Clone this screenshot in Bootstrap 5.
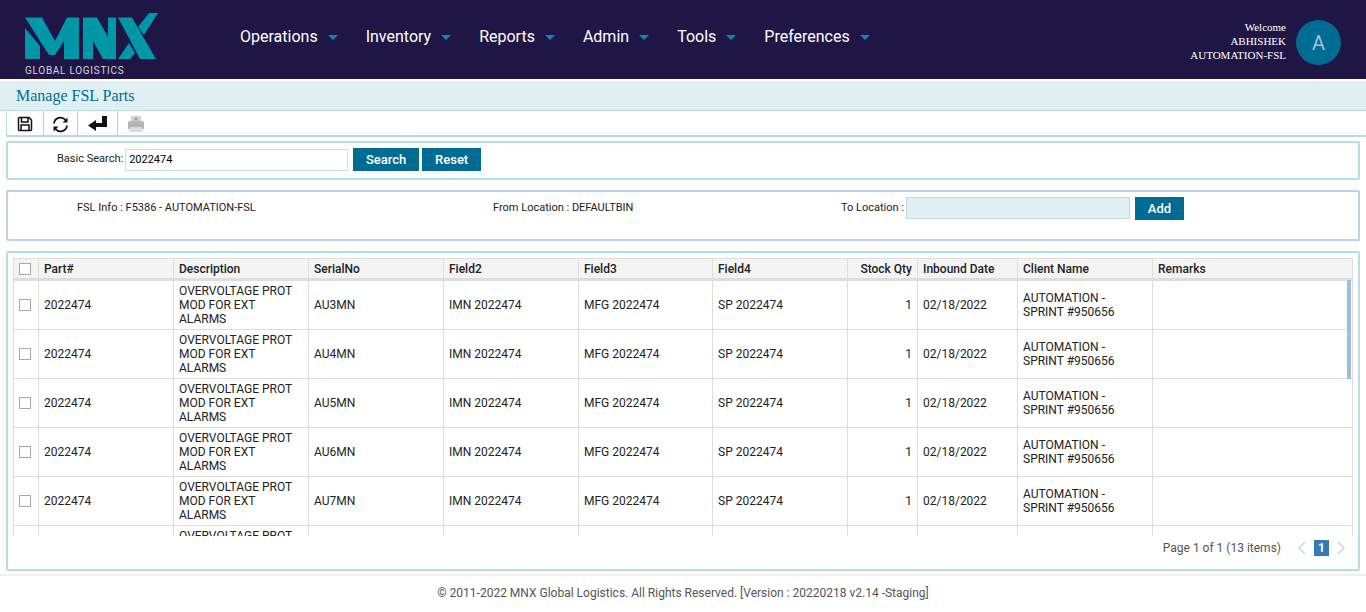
<!DOCTYPE html>
<html lang="en">
<head>
<meta charset="UTF-8">
<title>Manage FSL Parts</title>
<link href="https://cdn.jsdelivr.net/npm/bootstrap@5.3.0/dist/css/bootstrap.min.css" rel="stylesheet">
<style>
body { font-family: Roboto, "Liberation Sans", sans-serif; font-size: 12px; color: #222; background: #fff; height: 612px; overflow: hidden; }
.top-bar { height: 79px; background: #1f1646; color: #fff; padding-left: 25px; padding-right: 25px; }
.brand-box { width: 215px; padding-top: 13px; }
.brand-sub { font-size: 10px; letter-spacing: .72px; color: #d5d5dc; line-height: 10px; margin-top: 5px; white-space: nowrap; }
.menu-link { color: #fff; font-size: 16px; margin-right: 28px; text-decoration: none; display: flex; align-items: center; }
.menu-link:hover { color: #fff; }
.main-menu { margin-bottom: 6px; }
.menu-caret { width: 0; height: 0; border-left: 5px solid transparent; border-right: 5px solid transparent; border-top: 5px solid #0a85c0; margin-left: 10px; margin-top: 2px; }
.user-text { font-family: "Liberation Serif", serif; font-size: 11px; line-height: 14px; text-align: right; margin-right: 10px; margin-top: 3px; }
.user-avatar { width: 45px; height: 45px; border-radius: 50%; background: #006c93; color: #9cc6dd; font-size: 20px; margin-top: 6px; }
.title-bar { margin-top: 2px; height: 30px; background: #e0eff2; border-bottom: 1px solid #b7dde2; font-family: "Liberation Serif", serif; font-size: 16px; color: #006c93; padding-left: 16px; line-height: 29px; }
.tool-bar { height: 26px; margin-left: 6px; border-left: 1px solid #b7dde2; border-bottom: 2px solid #b7dde2; }
.tool-btn { height: 24px; padding-top: 2px; border-right: 1px solid #c8c8c8; }
.panel-box { margin-left: 6px; margin-right: 6px; border: 2px solid #b7dde2; border-radius: 2px; }
.search-panel { margin-top: 4px; height: 39px; padding-left: 49px; padding-bottom: 2px; }
.field-label { font-size: 11px; color: #222; white-space: nowrap; }
.search-input { width: 223px; height: 22px; border: 1px solid #c6dfe3; font-size: 11px; padding: 0 3px; margin-left: 2px; margin-right: 5px; outline: none; }
.mnx-btn { background: #006c93; color: #fff; border: 0; font-size: 13px; font-weight: 500; height: 23px; padding: 0; border-radius: 0; }
.info-panel { margin-top: 10px; height: 51px; border-color: #b8d2e8; }
.info-col { padding-top: 8px; font-size: 11px; color: #222; }
.to-input { width: 224px; height: 22px; background: #e0eff2; border: 1px solid #b7dde2; margin: 0 5px 0 2px; }
.grid-panel { margin-top: 10px; height: 320px; padding: 5px 5px 0 5px; }
.grid-scroll { height: 278px; overflow: hidden; position: relative; width: 1340px; border-right: 1px solid #ddd; }
.parts-grid { table-layout: fixed; border-collapse: collapse; width: 1340px; font-size: 12px; margin: 0; }
.parts-grid th { background: #f4f4f4; font-weight: 500; height: 21px; padding: 1px 5px 0; border: 1px solid #ddd; border-bottom: 3px solid #ddd; white-space: nowrap; color: #222; }
.parts-grid td { height: 49px; padding: 0 5px; border: 1px solid #ddd; line-height: 14px; vertical-align: middle; color: #222; }
.parts-grid tbody tr:first-child td { height: 50px; }
.fake-check { display: block; width: 12px; height: 12px; border: 1px solid #a8a8a8; background: #fff; }
.grid-thumb { position: absolute; right: 1px; top: 22px; width: 4px; height: 99px; background: #9cbfdc; }
.pager-row { height: 24px; padding-right: 7px; color: #555; }
.pager-cur { width: 15px; height: 16px; background: #337ab7; color: #fff; font-weight: 700; line-height: 16px; text-align: center; margin: 0 7px; }
.site-foot { margin-top: 3px; border-top: 2px solid #eee; text-align: center; color: #555; font-size: 12px; padding-top: 8px; }
</style>
</head>
<body>
<div class="top-bar d-flex align-items-center">
  <div class="brand-box align-self-start">
    <svg width="134" height="48" viewBox="0 0 134 48" class="d-block">
      <g fill="#0097a9">
        <polygon points="0,15 15,33 15,46 0,46"/>
        <polygon points="0,4.500 17,4.500 30,28 42,4.500 54,4.500 54,46 39,46 39,28 30,42 24,42"/>
        <polygon points="58,4.500 72,4.500 83,24 83,4.500 91,4.500 91,46 78,46 68,28 68,46 58,46"/>
        <polygon points="93,4.500 107,4.500 131,46 115,46"/>
        <polygon points="93,46 104,30 110,40 105,46"/>
        <polygon points="113,14 124,0 133,0 119,22"/>
      </g>
    </svg>
    <div class="brand-sub">GLOBAL LOGISTICS</div>
  </div>
  <nav class="main-menu d-flex flex-grow-1">
    <a class="menu-link" href="#">Operations<span class="menu-caret"></span></a>
    <a class="menu-link" href="#">Inventory<span class="menu-caret"></span></a>
    <a class="menu-link" href="#">Reports<span class="menu-caret"></span></a>
    <a class="menu-link" href="#">Admin<span class="menu-caret"></span></a>
    <a class="menu-link" href="#">Tools<span class="menu-caret"></span></a>
    <a class="menu-link" href="#">Preferences<span class="menu-caret"></span></a>
  </nav>
  <div class="user-text">Welcome<br>ABHISHEK<br>AUTOMATION-FSL</div>
  <div class="user-avatar d-flex align-items-center justify-content-center">A</div>
</div>
<div class="title-bar">Manage FSL Parts</div>
<div class="tool-bar d-flex">
  <div class="tool-btn d-flex align-items-center justify-content-center" style="width:37px">
    <svg width="16" height="16" viewBox="0 0 16 16" fill="none" stroke="#111" stroke-width="1.5"><path d="M1.500 2.500q0-1 1-1h9.500l2.500 2.500v9.500q0 1-1 1h-11q-1 0-1-1z"/><path d="M4.500 1.500v4.500h6.500v-4.500M4 14.500v-5.500h8v5.500"/></svg>
  </div>
  <div class="tool-btn d-flex align-items-center justify-content-center" style="width:34px">
    <svg width="17" height="17" viewBox="0 0 17 17" fill="none" stroke="#111" stroke-width="1.800"><path d="M2 7.500a6.500 6.500 0 0 1 11.500-3.500"/><path d="M15 9.500a6.500 6.500 0 0 1-11.500 3.500"/><path fill="#111" stroke="none" d="M15.500 1.500v5h-5zM1.500 15.500v-5h5z"/></svg>
  </div>
  <div class="tool-btn d-flex align-items-center justify-content-center" style="width:40px">
    <svg width="20" height="16" viewBox="0 0 20 16"><path fill="#111" d="M14 0h5v11H8v4L0 9.500 8 4v3h6z"/></svg>
  </div>
  <div class="tool-btn d-flex align-items-center justify-content-center border-0" style="width:35px">
    <svg width="18" height="18" viewBox="0 0 18 18"><path fill="#d0d0d0" d="M4 1h10v6H4z"/><path fill="#b4b4b4" d="M1 8q0-2 2-2h12q2 0 2 2v6H1z"/><path fill="#dcdcdc" d="M3 12h12v5H3z"/><path stroke="#888" d="M7.500 4h3M9 2.500v3"/></svg>
  </div>
</div>
<div class="panel-box search-panel d-flex align-items-center">
  <span class="field-label">Basic Search:</span>
  <input class="search-input" value="2022474">
  <button class="btn mnx-btn" style="width:66px;margin-right:3px">Search</button>
  <button class="btn mnx-btn" style="width:59px">Reset</button>
</div>
<div class="panel-box info-panel d-flex">
  <div class="info-col" style="width:485px;padding-left:69px">FSL Info : F5386 - AUTOMATION-FSL</div>
  <div class="info-col" style="width:348px">From Location : DEFAULTBIN</div>
  <div class="d-flex align-items-start" style="padding-top:5px">
    <span class="field-label" style="padding-top:3px">To Location :</span>
    <span class="to-input"></span>
    <button class="btn mnx-btn" style="width:49px">Add</button>
  </div>
</div>
<div class="panel-box grid-panel">
  <div class="grid-scroll">
    <table class="parts-grid">
      <colgroup>
        <col style="width:25px"><col style="width:135px"><col style="width:135px"><col style="width:135px"><col style="width:135px"><col style="width:134px"><col style="width:135px"><col style="width:70px"><col style="width:100px"><col style="width:135px"><col style="width:201px">
      </colgroup>
      <thead>
        <tr><th><span class="fake-check"></span></th><th>Part#</th><th>Description</th><th>SerialNo</th><th>Field2</th><th>Field3</th><th>Field4</th><th class="text-end">Stock Qty</th><th>Inbound Date</th><th>Client Name</th><th>Remarks</th></tr>
      </thead>
      <tbody id="rows"></tbody>
    </table>
    <div class="grid-thumb"></div>
  </div>
  <div class="pager-row d-flex align-items-center justify-content-end">
    <span>Page 1 of 1 (13 items)</span>
    <svg class="ms-3" width="10" height="14" viewBox="0 0 10 14" fill="none" stroke="#c5d9ec" stroke-width="1.500"><path d="M8 1 2 7l6 6"/></svg>
    <span class="pager-cur">1</span>
    <svg width="10" height="14" viewBox="0 0 10 14" fill="none" stroke="#c5d9ec" stroke-width="1.500"><path d="m2 1 6 6-6 6"/></svg>
  </div>
</div>
<div class="site-foot">© 2011-2022 MNX Global Logistics. All Rights Reserved. [Version : 20220218 v2.14 -Staging]</div>
<script>
const serials = ['AU3MN', 'AU4MN', 'AU5MN', 'AU6MN', 'AU7MN', 'AU8MN'];
document.getElementById('rows').innerHTML = serials.map(s => `<tr>
  <td><span class="fake-check"></span></td><td>2022474</td><td>OVERVOLTAGE PROT MOD FOR EXT ALARMS</td><td>${s}</td>
  <td>IMN 2022474</td><td>MFG 2022474</td><td>SP 2022474</td><td class="text-end">1</td><td>02/18/2022</td>
  <td>AUTOMATION - SPRINT #950656</td><td></td></tr>`).join('');
</script>
<script src="https://cdn.jsdelivr.net/npm/bootstrap@5.3.0/dist/js/bootstrap.bundle.min.js"></script>
</body>
</html>
